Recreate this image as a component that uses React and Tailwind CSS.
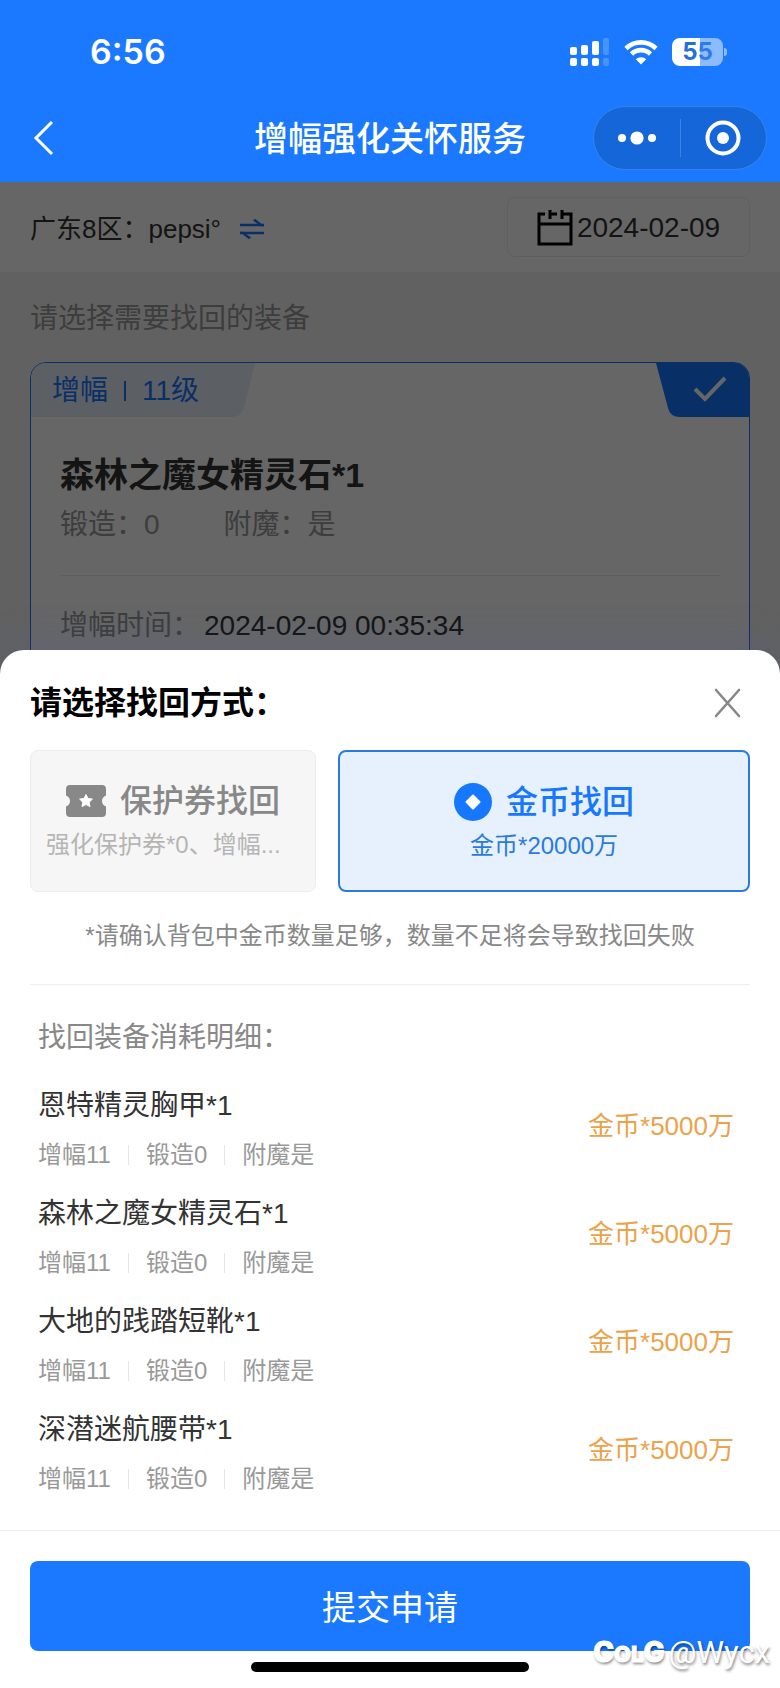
import { useState } from "react";

const records = [
  { name: "恩特精灵胸甲*1", cost: "金币*5000万" },
  { name: "森林之魔女精灵石*1", cost: "金币*5000万" },
  { name: "大地的践踏短靴*1", cost: "金币*5000万" },
  { name: "深潜迷航腰带*1", cost: "金币*5000万" },
];

const StatusBar = () => {
  return (
    <div className="flex h-[94px] items-center justify-between pt-2.5 pr-[53px] pl-[90px]">
      <span className="font-['Inter',sans-serif] text-[34px] leading-10 font-semibold">
        6:56
      </span>
      <div className="flex items-center gap-3.5">
        <svg width="40" height="28" viewBox="0 0 40 28" fill="currentColor">
          <rect x="0" y="9" width="7" height="8" rx="2" />
          <rect x="11" y="7" width="7" height="10" rx="2" />
          <rect x="22" y="3" width="7" height="14" rx="2" />
          <rect x="33" y="0" width="6" height="17" rx="2" opacity="0.2" />
          <rect x="0" y="20" width="7" height="8" rx="2" />
          <rect x="11" y="20" width="7" height="8" rx="2" />
          <rect x="22" y="20" width="7" height="8" rx="2" />
          <rect x="33" y="20" width="6" height="8" rx="2" opacity="0.2" />
        </svg>
        <svg width="34" height="26" viewBox="0 0 34 26" fill="none">
          <path
            d="M2 9.5a21.5 21.5 0 0 1 30 0M7.5 15a13.6 13.6 0 0 1 19 0"
            stroke="currentColor"
            strokeWidth="4.6"
          />
          <path
            d="M17 25.5l-5.2-5.3a7.6 7.6 0 0 1 10.4 0z"
            fill="currentColor"
          />
        </svg>
        <div className="flex items-center gap-px">
          <div className="flex h-7 w-[51px] items-center justify-center rounded-lg bg-linear-to-r from-white from-55% to-white/50 to-55% font-['Inter',sans-serif] text-[24px] leading-7 font-bold">
            <span className="text-[#2470d8]">5</span>
            <span className="text-[#2f7be6]">5</span>
          </div>
          <span className="h-2 w-[3px] rounded-r-full bg-white/50" />
        </div>
      </div>
    </div>
  );
};

const NavBar = () => {
  return (
    <div className="grid h-[88px] grid-cols-[1fr_auto_1fr] items-center px-[13px]">
      <button aria-label="返回" className="ml-5 w-6">
        <svg width="24" height="36" viewBox="0 0 24 36" fill="none">
          <path d="M19 2L3 18l16 16" stroke="currentColor" strokeWidth="3" />
        </svg>
      </button>
      <h1 className="pt-0.5 text-[34px] leading-12 font-medium">
        增幅强化关怀服务
      </h1>
      <div className="flex h-16 w-[174px] items-center justify-self-end rounded-full border border-[#3a83e6] bg-[#1567d9]">
        <button aria-label="更多" className="flex flex-1 justify-center">
          <svg width="38" height="14" viewBox="0 0 38 14" fill="currentColor">
            <circle cx="4" cy="7" r="4" />
            <circle cx="19" cy="7" r="6.6" />
            <circle cx="34" cy="7" r="4" />
          </svg>
        </button>
        <span className="h-[38px] w-px bg-[#3a83e6]" />
        <button aria-label="关闭小程序" className="flex flex-1 justify-center">
          <svg width="36" height="36" viewBox="0 0 36 36" fill="none">
            <circle cx="18" cy="18" r="15.5" stroke="currentColor" strokeWidth="4" />
            <circle cx="18" cy="18" r="6" fill="currentColor" />
          </svg>
        </button>
      </div>
    </div>
  );
};

const RoleBar = () => {
  return (
    <div className="flex h-[90px] items-center justify-between bg-white px-[30px]">
      <div className="flex items-center gap-[18px] pt-1 text-[26px] leading-9 text-[#333]">
        <span>广东8区：pepsi°</span>
        <button aria-label="切换角色" className="text-[#1677ff]">
          <svg width="26" height="22" viewBox="0 0 26 22" fill="none">
            <path d="M1 7h24M1 15h24" stroke="currentColor" strokeWidth="2.6" />
            <path
              d="M25.5 8.200H22L14 2.500l2-1.700zM.5 13.800H4l8 5.700-2 1.700z"
              fill="currentColor"
            />
          </svg>
        </button>
      </div>
      <button className="flex h-[60px] w-[243px] items-center justify-center gap-1 rounded-lg border border-[#eee] pt-0.5 text-[28px] text-[#333]">
        <svg width="36" height="36" viewBox="0 0 36 36" fill="none">
          <path
            d="M8 4H2v30h32V4h-9M2 14h32M13 0v9M13 4h7M25 0v9"
            stroke="#000"
            strokeWidth="3"
          />
        </svg>
        2024-02-09
      </button>
    </div>
  );
};

const EquipCard = () => {
  return (
    <div className="mx-[30px] h-[400px] overflow-hidden rounded-2xl border border-[#1677ff] bg-white">
      <div className="flex justify-between">
        <div className="relative h-[54px] w-[224px]">
          <svg
            className="absolute inset-0"
            width="224"
            height="54"
            viewBox="0 0 224 54"
          >
            <path
              d="M0 0H224L213 45Q210 54 201 54H0z"
              fill="#e6f0fc"
            />
          </svg>
          <div className="relative flex items-center gap-4 pt-2.5 pl-[21px] text-[28px] leading-9 text-[#1677ff]">
            <span>增幅</span>
            <span className="h-5 w-0.5 bg-[#1677ff]" />
            <span>11级</span>
          </div>
        </div>
        <svg width="93" height="54" viewBox="0 0 93 54" fill="none">
          <path d="M0 0H93V54H24Q14 54 12 45z" fill="#1677ff" />
          <path d="M39 26l10 10 20-21" stroke="#fff" strokeWidth="4" />
        </svg>
      </div>
      <div className="px-[29px] pt-[34px]">
        <h2 className="text-[34px] leading-12 font-bold text-[#333]">
          森林之魔女精灵石*1
        </h2>
        <div className="mt-2 flex gap-16 border-b border-[#eee] pb-8 text-[28px] leading-9 text-[#999]">
          <span>锻造：0</span>
          <span>附魔：是</span>
        </div>
        <div className="mt-[30px] flex gap-1 text-[28px] leading-10">
          <span className="text-[#999]">增幅时间：</span>
          <span className="text-[#333]">2024-02-09 00:35:34</span>
        </div>
      </div>
    </div>
  );
};

const RecoverySheet = () => {
  const [method, setMethod] = useState("gold");

  return (
    <section className="relative z-10 -mt-6 shrink-0 rounded-t-[24px] bg-white shadow-[0_-8px_40px_rgba(80,100,180,0.16)]">
      <div className="flex h-[100px] items-center justify-between pt-1.5 pr-[38px] pl-[30px]">
        <h2 className="text-[32px] leading-11 font-bold text-black">
          请选择找回方式：
        </h2>
        <button aria-label="关闭" className="text-[#888]">
          <svg width="30" height="30" viewBox="0 0 30 30" fill="none">
            <path
              d="M4 2l23 26M27 2L4 28"
              stroke="currentColor"
              strokeWidth="2.6"
              strokeLinecap="round"
            />
          </svg>
        </button>
      </div>

      <div className="grid h-[142px] grid-cols-[41fr_59fr] gap-[22px] px-[30px]">
        <button
          disabled
          className="flex min-w-0 flex-col items-center rounded-lg border border-[#ececec] bg-[#f6f6f6] px-[15px] pt-7"
        >
          <span className="flex items-center gap-3.5 text-[32px] leading-11 font-medium text-[#888]">
            <svg width="40" height="32" viewBox="0 0 40 32">
              <path
                d="M4 0H36Q40 0 40 4V10.500Q36 12 36 16T40 21.500V28Q40 32 36 32H4Q0 32 0 28V21.500Q4 20 4 16T0 10.500V4Q0 0 4 0z"
                fill="#888"
              />
              <path
                d="M20 9.500l2 4 4.400.6-3.200 3.100.8 4.400-4-2.100-4 2.100.8-4.400-3.200-3.100 4.400-.6z"
                fill="#fff"
                stroke="#fff"
                strokeLinejoin="round"
              />
            </svg>
            保护券找回
          </span>
          <span className="self-start text-[24px] leading-11 whitespace-nowrap text-[#b5b5b5]">
            强化保护券*0、增幅...
          </span>
        </button>
        <button
          aria-pressed={method === "gold"}
          onClick={() => setMethod("gold")}
          className="flex min-w-0 flex-col items-center rounded-lg border-2 border-[#2b7bdc] bg-[#e6f1fd] pt-7"
        >
          <span className="flex items-center gap-3.5 text-[32px] leading-11 font-medium text-[#1677ff]">
            <svg width="38" height="38" viewBox="0 0 38 38">
              <circle cx="19" cy="19" r="19" fill="#1677ff" />
              <path
                d="M19 12.500l6.500 6.500-6.500 6.500-6.500-6.500z"
                fill="#fff"
                stroke="#fff"
                strokeWidth="2"
                strokeLinejoin="round"
              />
            </svg>
            金币找回
          </span>
          <span className="text-[24px] leading-11 text-[#2b7bdc]">
            金币*20000万
          </span>
        </button>
      </div>

      <div className="mx-[30px] border-b border-[#eee] pt-[26px] pb-[30px]">
        <p className="text-center text-[24px] leading-9 text-[#888]">
          *请确认背包中金币数量足够，数量不足将会导致找回失败
        </p>
      </div>

      <div className="pt-[33px] pr-[46px] pb-[35px] pl-[38px]">
        <h3 className="text-[28px] leading-10 text-[#888]">
          找回装备消耗明细：
        </h3>
        <ul className="mt-7 flex flex-col gap-[23px]">
          {records.map((item) => (
            <li key={item.name} className="flex items-center justify-between">
              <div>
                <p className="text-[28px] leading-10 text-[#333]">{item.name}</p>
                <div className="mt-[13px] flex items-center gap-[17px] text-[24px] leading-8 text-[#999]">
                  <span>增幅11</span>
                  <span className="h-5 w-px bg-[#e5e5e5]" />
                  <span>锻造0</span>
                  <span className="h-5 w-px bg-[#e5e5e5]" />
                  <span>附魔是</span>
                </div>
              </div>
              <span className="pb-1.5 text-[26px] leading-9 text-[#eba24a]">
                {item.cost}
              </span>
            </li>
          ))}
        </ul>
      </div>

      <div className="flex flex-col items-center border-t border-[#eee] px-[30px] pt-[30px] pb-4">
        <button className="h-[90px] w-full rounded-lg bg-[#1a79ff] pt-1 text-[34px] text-white">
          提交申请
        </button>
        <span className="mt-[11px] h-2.5 w-[278px] rounded-full bg-black" />
      </div>

      <div className="absolute right-2.5 bottom-4 flex items-center gap-1 text-white">
        <span className="font-['Inter',sans-serif] text-[28px] leading-9 font-extrabold [-webkit-text-stroke:1px_white] [text-shadow:1px_2px_3px_rgba(0,0,0,0.5)]">
          C<span className="text-[22px]">OL</span>G
        </span>
        <span className="font-['Roboto',sans-serif] text-[31px] leading-9 [text-shadow:1px_2px_3px_rgba(0,0,0,0.5)]">
          @Wycx
        </span>
      </div>
    </section>
  );
};

const App = () => {
  return (
    <div className="flex h-screen flex-col bg-[#f3f3f3] font-['Liberation_Sans','Noto_Sans_CJK_SC',sans-serif]">
      <header className="shrink-0 bg-[#1a79ff] text-white">
        <StatusBar />
        <NavBar />
      </header>
      <main className="relative min-h-0 flex-1 overflow-hidden">
        <RoleBar />
        <p className="px-[30px] pt-[27px] pb-[23px] text-[28px] leading-10 text-[#999]">
          请选择需要找回的装备
        </p>
        <EquipCard />
        <div className="absolute inset-0 bg-black/60" />
      </main>
      <RecoverySheet />
    </div>
  );
};

export default App;
